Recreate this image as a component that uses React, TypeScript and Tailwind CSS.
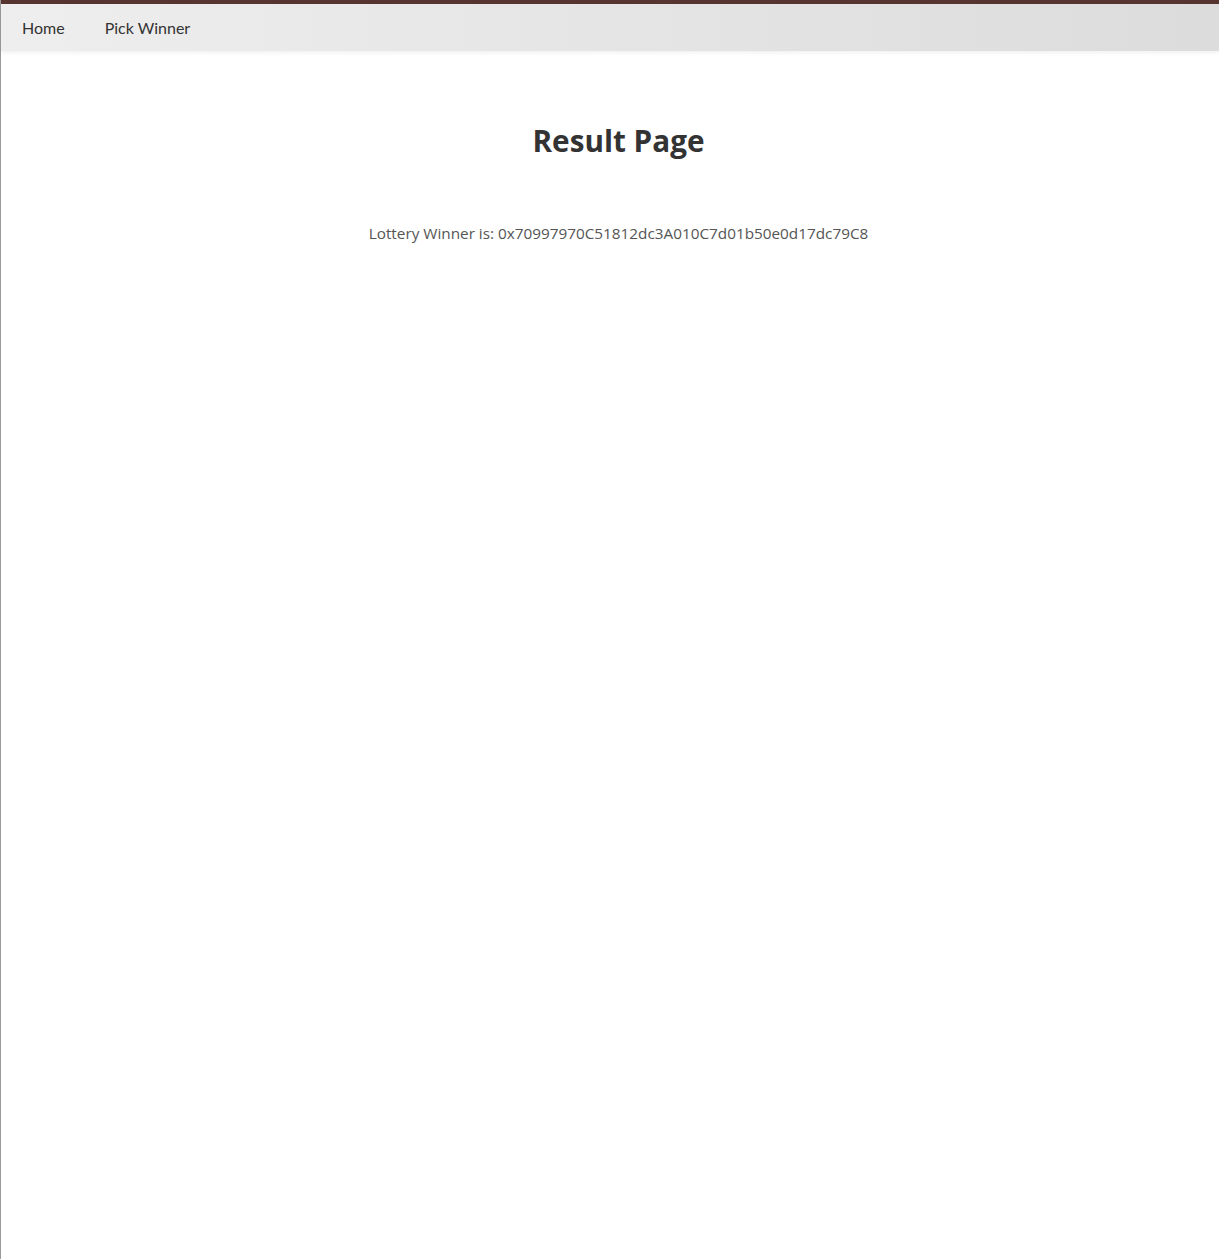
export default function App() {
  const winner = "0x70997970C51812dc3A010C7d01b50e0d17dc79C8";

  return (
    <div className="min-h-[1259px] bg-white border-l border-[#9a9a9a] font-['Lato','Open_Sans',sans-serif]">
      {/* barra superior */}
      <div className="h-[4px] bg-[#583431]" />

      <nav className="h-[47px] flex items-center gap-10 px-[21px] bg-gradient-to-r from-[#eeeeee] to-[#dcdcdc] shadow-[0_2px_4px_rgba(0,0,0,0.06)]">
        <a className="text-[16px] text-[#333] cursor-pointer">Home</a>
        <a className="text-[16px] text-[#333] cursor-pointer">Pick Winner</a>
      </nav>

      <main className="flex flex-col items-center pt-[71px] pl-[17px]">
        <h1 className="text-[29.7px] leading-[38px] font-bold text-[#333] font-['Open_Sans',sans-serif]">
          Result Page
        </h1>
        <p className="mt-[62px] text-[15.3px] text-[#555] font-['Open_Sans',sans-serif]">
          Lottery Winner is: {winner}
        </p>
      </main>
    </div>
  );
}
